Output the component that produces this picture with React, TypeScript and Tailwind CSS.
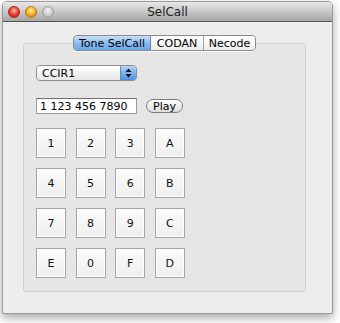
import React from "react";

const keys = ["1", "2", "3", "A", "4", "5", "6", "B", "7", "8", "9", "C", "E", "0", "F", "D"];

export default function App() {
  return (
    <div
      className="w-[340px] h-[323px] bg-white pt-px pl-[2px]"
      style={{ fontFamily: '"DejaVu Sans", "Lucida Grande", sans-serif' }}
    >
      <div className="w-[331px] h-[313px] flex flex-col bg-[#ededed] border border-[#9a9a9a] rounded-t-[5px] shadow-[0_4px_10px_rgba(0,0,0,0.35)] overflow-hidden">
        {/* title bar */}
        <div className="relative h-[20px] shrink-0 flex items-center justify-center bg-gradient-to-b from-[#e9e9e9] to-[#a6a6a6] border-b border-[#555]">
          <div className="absolute left-[5px] top-[4px] flex gap-[5px]">
            <div className="w-[12px] h-[12px] rounded-full border border-[#a22] bg-[radial-gradient(circle_at_50%_35%,#ffb0a8,#e8372c_55%,#b81a12)]" />
            <div className="w-[12px] h-[12px] rounded-full border border-[#b87a10] bg-[radial-gradient(circle_at_50%_35%,#fff0a0,#f6a623_55%,#c57b0b)]" />
            <div className="w-[12px] h-[12px] rounded-full border border-[#9a9a9a] bg-[radial-gradient(circle_at_50%_35%,#f4f4f4,#c8c8c8_60%,#aaa)]" />
          </div>
          <span className="text-[12px] text-[#222] leading-none">SelCall</span>
        </div>
        {/* content */}
        <div className="flex-1 pl-[20px] pt-[21px]">
          <div className="relative w-[283px] h-[249px] bg-[#e6e6e6] border border-[#cfcfcf] rounded-[3px] pl-[12px] pt-[21px]">
            {/* segmented control */}
            <div className="absolute left-[49px] top-[-9px] flex h-[16px] text-[11px] leading-none text-black rounded-[4px] border border-[#8a8a8a] overflow-hidden shadow-[0_1px_0_rgba(255,255,255,0.8)]">
              <div className="w-[77px] flex items-center justify-center bg-gradient-to-b from-[#c8e0f8] via-[#8ebcef] to-[#6aa6ea] border-r border-[#6b86a8]">
                Tone SelCall
              </div>
              <div className="w-[53px] flex items-center justify-center bg-gradient-to-b from-white to-[#ececec] border-r border-[#a0a0a0]">
                CODAN
              </div>
              <div className="w-[51px] flex items-center justify-center bg-gradient-to-b from-white to-[#ececec]">
                Necode
              </div>
            </div>
            {/* popup */}
            <div className="w-[101px] h-[16px] flex rounded-[4px] border border-[#8e8e8e] overflow-hidden text-[11px] leading-none text-black">
              <div className="flex-1 flex items-center pl-[5px] bg-gradient-to-b from-white to-[#e6e6e6]">CCIR1</div>
              <div className="w-[16px] flex items-center justify-center bg-gradient-to-b from-[#b8d6f8] via-[#7bb1ee] to-[#4c8fe0] border-l border-[#6a88b0]">
                <svg width="7" height="10" viewBox="0 0 7 10">
                  <path d="M3.5 0.5 L6.5 4 L0.5 4 Z" fill="#111" />
                  <path d="M3.5 9.5 L6.5 6 L0.5 6 Z" fill="#111" />
                </svg>
              </div>
            </div>
            {/* text field + play */}
            <div className="flex items-center mt-[17px] gap-[9px]">
              <div className="w-[101px] h-[16px] bg-white border border-[#9a9a9a] border-t-[#6f6f6f] flex items-center pl-[3px] text-[11px] leading-none text-black">
                1 123 456 7890
              </div>
              <div className="w-[37px] h-[14px] rounded-full border border-[#7a7a7a] bg-gradient-to-b from-white to-[#dcdcdc] flex items-center justify-center text-[11px] leading-none text-black">
                Play
              </div>
            </div>
            {/* keypad */}
            <div className="grid grid-cols-[30px_30px_30px_30px] gap-x-[9.6px] gap-y-[10px] mt-[14px]">
              {keys.map((k) => (
                <div
                  key={k}
                  className="w-[30px] h-[30px] border border-[#a4a4a4] bg-gradient-to-b from-[#fbfbfb] to-[#efefef] shadow-[inset_0_0_0_1px_#ffffff] flex items-center justify-center text-[11px] leading-none text-[#111]"
                >
                  {k}
                </div>
              ))}
            </div>
          </div>
        </div>
      </div>
    </div>
  );
}
